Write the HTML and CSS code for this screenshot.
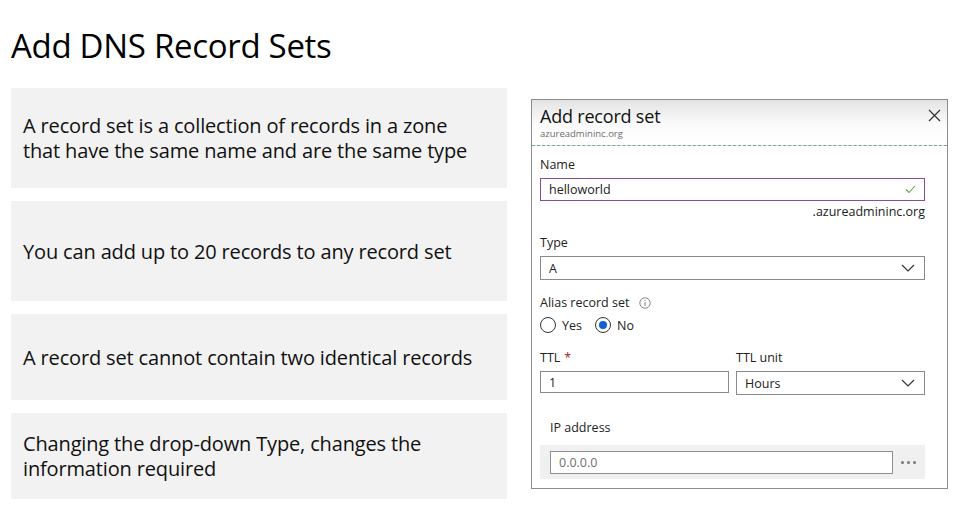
FILE: index.html
```html
<!DOCTYPE html>
<html lang="en">
<head>
<meta charset="utf-8">
<title>Add DNS Record Sets</title>
<link rel="stylesheet" href="styles.css">
</head>
<body>
<div class="page">
  <h1 class="title">Add DNS Record Sets</h1>
  <div class="content">
    <div class="points">
      <div class="point tall">A record set is a collection of records in a zone that have the same name and are the same type</div>
      <div class="point tall">You can add up to 20 records to any record set</div>
      <div class="point">A record set cannot contain two identical records</div>
      <div class="point">Changing the drop-down Type, changes the information required</div>
    </div>
    <div class="panel">
      <div class="panel-head">
        <div class="panel-titles">
          <div class="panel-title">Add record set</div>
          <div class="panel-sub">azureadmininc.org</div>
        </div>
        <svg class="close" width="13" height="13" viewBox="0 0 13 13"><path d="M1 1L12 12M12 1L1 12" stroke="#333" stroke-width="1.2" fill="none"/></svg>
      </div>
      <div class="panel-body">
        <div class="label">Name</div>
        <div class="input name-input">
          <span>helloworld</span>
          <svg width="11" height="9" viewBox="0 0 11 9"><path d="M1 4.5L4 7.5L10 1" stroke="#5ea34a" stroke-width="1.1" fill="none"/></svg>
        </div>
        <div class="suffix">.azureadmininc.org</div>

        <div class="label type-label">Type</div>
        <div class="input select">
          <span>A</span>
          <svg class="chev" width="14" height="8" viewBox="0 0 14 8"><path d="M1 1L7 7L13 1" stroke="#333" stroke-width="1.2" fill="none"/></svg>
        </div>

        <div class="label alias-label">Alias record set
          <svg class="info" width="12" height="12" viewBox="0 0 12 12"><circle cx="6" cy="6" r="5.2" stroke="#777" stroke-width="0.9" fill="none"/><path d="M6 5.2V8.8" stroke="#777" stroke-width="1"/><circle cx="6" cy="3.6" r="0.6" fill="#777"/></svg>
        </div>
        <div class="radios">
          <span class="radio"></span><span class="radio-text">Yes</span>
          <span class="radio on"></span><span class="radio-text">No</span>
        </div>

        <div class="ttl-row">
          <div class="ttl-col">
            <div class="label">TTL <span class="req">*</span></div>
            <div class="input ttl-input"><span>1</span></div>
          </div>
          <div class="ttl-col">
            <div class="label">TTL unit</div>
            <div class="input select unit-select">
              <span>Hours</span>
              <svg class="chev" width="14" height="8" viewBox="0 0 14 8"><path d="M1 1L7 7L13 1" stroke="#333" stroke-width="1.2" fill="none"/></svg>
            </div>
          </div>
        </div>

        <div class="ip-label">IP address</div>
        <div class="ip-band">
          <div class="input ip-input"><span>0.0.0.0</span></div>
          <div class="dots"><i></i><i></i><i></i></div>
        </div>
      </div>
    </div>
  </div>
</div>
</body>
</html>
```

FILE: styles.css
```css
html, body {
  margin: 0;
  padding: 0;
  background: #ffffff;
}
body {
  font-family: "Open Sans", "Noto Sans", sans-serif;
  color: #111;
  width: 963px;
  height: 508px;
  overflow: hidden;
}
.page {
  padding: 0 15px 0 11px;
}
.title {
  margin: 0;
  padding-top: 24px;
  height: 88px;
  box-sizing: border-box;
  font-size: 33px;
  font-weight: 400;
  line-height: 44px;
  letter-spacing: -0.3px;
  color: #000;
  font-family: "Open Sans", sans-serif;
}
.content {
  display: flex;
  gap: 24px;
}
.points {
  width: 496px;
  display: flex;
  flex-direction: column;
  gap: 13px;
}
.point {
  background: #f2f2f2;
  height: 86px;
  display: flex;
  align-items: center;
  padding: 0 30px 0 12px;
  box-sizing: border-box;
  font-size: 20px;
  line-height: 25px;
  color: #111;
  letter-spacing: -0.15px;
}
.point.tall {
  height: 100px;
}
.panel {
  margin-top: 11px;
  width: 417px;
  height: 390px;
  box-sizing: border-box;
  border: 1px solid #8c8c8c;
  font-family: "Open Sans", sans-serif;
  font-size: 12.5px;
  color: #222;
}
.panel-head {
  height: 45px;
  border-bottom: 1px dashed #7aa3a3;
  background: linear-gradient(#e4e4e4 0%, #fbfbfb 55%, #ffffff 100%);
  display: flex;
  justify-content: space-between;
  padding: 0 6px 0 8px;
}
.panel-title {
  font-size: 18px;
  line-height: 20px;
  padding-top: 6px;
  color: #111;
  letter-spacing: -0.2px;
}
.panel-sub {
  font-size: 9.5px;
  line-height: 13px;
  margin-top: 1px;
  color: #6d6d6d;
}
.close {
  margin-top: 9px;
}
.panel-body {
  padding: 10px 22px 0 8px;
}
.label {
  line-height: 18px;
  height: 18px;
  display: flex;
  align-items: center;
  gap: 0;
}
.input {
  box-sizing: border-box;
  border: 1px solid #8a8a8a;
  height: 23px;
  display: flex;
  align-items: center;
  justify-content: space-between;
  padding: 0 8px;
  background: #fff;
}
.name-input {
  margin-top: 4px;
  border-color: #8b4a9c;
}
.suffix {
  text-align: right;
  line-height: 22px;
  color: #222;
}
.type-label {
  margin-top: 11px;
}
.select {
  margin-top: 4px;
  height: 24px;
}
.chev {
  margin-right: 1px;
}
.alias-label {
  margin-top: 14px;
}
.info {
  margin-left: 10px;
}
.radios {
  display: flex;
  align-items: center;
  height: 20px;
  margin-top: 3px;
}
.radio {
  width: 16px;
  height: 16px;
  box-sizing: border-box;
  border: 1px solid #333;
  border-radius: 50%;
  display: inline-flex;
  align-items: center;
  justify-content: center;
}
.radio.on::after {
  content: "";
  width: 8px;
  height: 8px;
  border-radius: 50%;
  background: #0f62d6;
}
.radio-text {
  margin-left: 6px;
  margin-right: 13px;
}
.ttl-row {
  display: flex;
  gap: 7px;
  margin-top: 14px;
}
.ttl-col {
  flex: 1;
}
.ttl-col .input {
  margin-top: 4px;
}
.ttl-input {
  height: 22px;
}
.req {
  color: #a4262c;
  margin-left: 4px;
}
.ip-label {
  margin-top: 24px;
  padding-left: 10px;
  line-height: 18px;
}
.ip-band {
  margin-top: 8px;
  background: #f0f0f0;
  height: 34px;
  display: flex;
  align-items: center;
  padding: 0 9px 0 10px;
}
.ip-input {
  flex: 1;
  color: #6f6f6f;
  border-color: #8f8f8f;
}
.dots {
  display: flex;
  gap: 3px;
  margin-left: 8px;
}
.dots i {
  width: 3px;
  height: 3px;
  border-radius: 50%;
  background: #777;
}
```
